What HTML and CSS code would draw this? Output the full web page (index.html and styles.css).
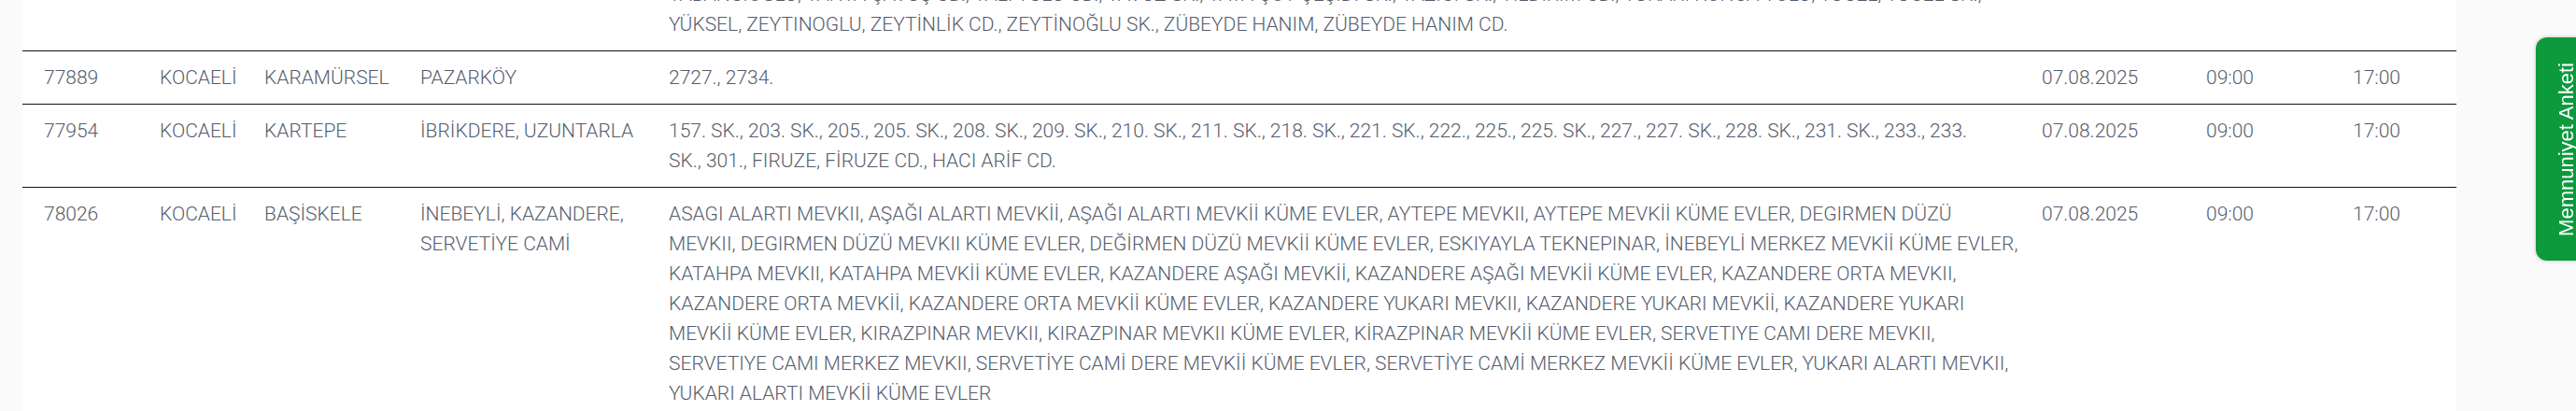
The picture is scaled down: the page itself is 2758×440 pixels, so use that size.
FILE: index.html
```html
<!DOCTYPE html>
<html lang="tr">
<head>
<meta charset="utf-8">
<title>Planlı Kesintiler</title>
<link rel="stylesheet" href="styles.css">
</head>
<body>
<main class="page">
  <section class="panel">
    <table class="outages">
      <colgroup>
        <col class="c-id"><col class="c-il"><col class="c-ilce"><col class="c-mah"><col class="c-sokak"><col class="c-tarih"><col class="c-bas"><col class="c-bit">
      </colgroup>
      <tbody>
        <tr>
          <td>77871</td><td>KOCAELİ</td><td>GÖLCÜK</td><td>MERKEZ</td>
          <td>ŞEHİT ASTSUBAY SK., ŞEHİT KOMANDO SK., ŞEHİTLER CD., TAŞKÖPRÜ CD., TEPE SK., TOPÇULAR SK., ULUDAĞ SK., ÜMİT SK., ÜNAL SK., VATAN CD.,<br>YABANCIOĞLU, YAHYA ÇAVUŞ CD., YALI TULU CD., YAVUZ SK., YAYA ÇOT ÇEŞİDİ SK., YAZICI SK., YILDIRIM CD., YUKARI KONCA YOLU, YÜCEL, YÜCEL SK.,<br>YÜKSEL, ZEYTINOGLU, ZEYTİNLİK CD., ZEYTİNOĞLU SK., ZÜBEYDE HANIM, ZÜBEYDE HANIM CD.</td>
          <td>07.08.2025</td><td>09:00</td><td>17:00</td>
        </tr>
        <tr>
          <td>77889</td><td>KOCAELİ</td><td>KARAMÜRSEL</td><td>PAZARKÖY</td>
          <td>2727., 2734.</td>
          <td>07.08.2025</td><td>09:00</td><td>17:00</td>
        </tr>
        <tr>
          <td>77954</td><td>KOCAELİ</td><td>KARTEPE</td><td>İBRİKDERE, UZUNTARLA</td>
          <td>157. SK., 203. SK., 205., 205. SK., 208. SK., 209. SK., 210. SK., 211. SK., 218. SK., 221. SK., 222., 225., 225. SK., 227., 227. SK., 228. SK., 231. SK., 233., 233.<br>SK., 301., FIRUZE, FİRUZE CD., HACI ARİF CD.</td>
          <td>07.08.2025</td><td>09:00</td><td>17:00</td>
        </tr>
        <tr>
          <td>78026</td><td>KOCAELİ</td><td>BAŞİSKELE</td><td>İNEBEYLİ, KAZANDERE, SERVETİYE CAMİ</td>
          <td>ASAGI ALARTI MEVKII, AŞAĞI ALARTI MEVKİİ, AŞAĞI ALARTI MEVKİİ KÜME EVLER, AYTEPE MEVKII, AYTEPE MEVKİİ KÜME EVLER, DEGIRMEN DÜZÜ<br>MEVKII, DEGIRMEN DÜZÜ MEVKII KÜME EVLER, DEĞİRMEN DÜZÜ MEVKİİ KÜME EVLER, ESKIYAYLA TEKNEPINAR, İNEBEYLİ MERKEZ MEVKİİ KÜME EVLER,<br>KATAHPA MEVKII, KATAHPA MEVKİİ KÜME EVLER, KAZANDERE AŞAĞI MEVKİİ, KAZANDERE AŞAĞI MEVKİİ KÜME EVLER, KAZANDERE ORTA MEVKII,<br>KAZANDERE ORTA MEVKİİ, KAZANDERE ORTA MEVKİİ KÜME EVLER, KAZANDERE YUKARI MEVKII, KAZANDERE YUKARI MEVKİİ, KAZANDERE YUKARI<br>MEVKİİ KÜME EVLER, KIRAZPINAR MEVKII, KIRAZPINAR MEVKII KÜME EVLER, KİRAZPINAR MEVKİİ KÜME EVLER, SERVETIYE CAMI DERE MEVKII,<br>SERVETIYE CAMI MERKEZ MEVKII, SERVETİYE CAMİ DERE MEVKİİ KÜME EVLER, SERVETİYE CAMİ MERKEZ MEVKİİ KÜME EVLER, YUKARI ALARTI MEVKII,<br>YUKARI ALARTI MEVKİİ KÜME EVLER</td>
          <td>07.08.2025</td><td>09:00</td><td>17:00</td>
        </tr>
      </tbody>
    </table>
  </section>
</main>
<a class="survey" href="#"><span class="survey-label">Memnuniyet Anketi</span></a>
</body>
</html>
```

FILE: styles.css
```css
html, body {
  margin: 0;
  padding: 0;
}
body {
  background: #fafafa;
  font-family: Roboto, "Noto Sans", sans-serif;
  overflow: hidden;
}
.page {
  padding: 0 128px 0 24px;
}
.panel {
  background: #ffffff;
  margin-top: -66px;
}
.outages {
  width: 2606px;
  border-collapse: collapse;
  table-layout: fixed;
}
.c-id { width: 135px; }
.c-il { width: 112px; }
.c-ilce { width: 167px; }
.c-mah { width: 266px; }
.c-sokak { width: 1470px; }
.c-tarih { width: 176px; }
.c-bas { width: 157px; }
.c-bit { width: 123px; }
.outages td {
  vertical-align: top;
  padding: 12px 4px 12px 12px;
  font-size: 21px;
  font-weight: 300;
  line-height: 32px;
  color: #565d6d;
  border-bottom: 1px solid #111111;
  white-space: normal;
}
.outages td:first-child {
  padding-left: 23px;
}
.outages td:nth-child(5) {
  white-space: nowrap;
}
.survey {
  position: fixed;
  top: 40px;
  right: -23px;
  width: 66px;
  height: 239px;
  background: #0c9a3d;
  border-radius: 12px 0 0 12px;
  box-shadow: 0 0 4px rgba(0, 0, 0, 0.25);
  display: flex;
  align-items: center;
  justify-content: center;
  text-decoration: none;
}
.survey-label {
  writing-mode: vertical-rl;
  transform: rotate(180deg);
  color: #ffffff;
  font-family: "Liberation Sans", Arial, sans-serif;
  font-size: 22px;
  line-height: 24px;
  white-space: nowrap;
}
```
